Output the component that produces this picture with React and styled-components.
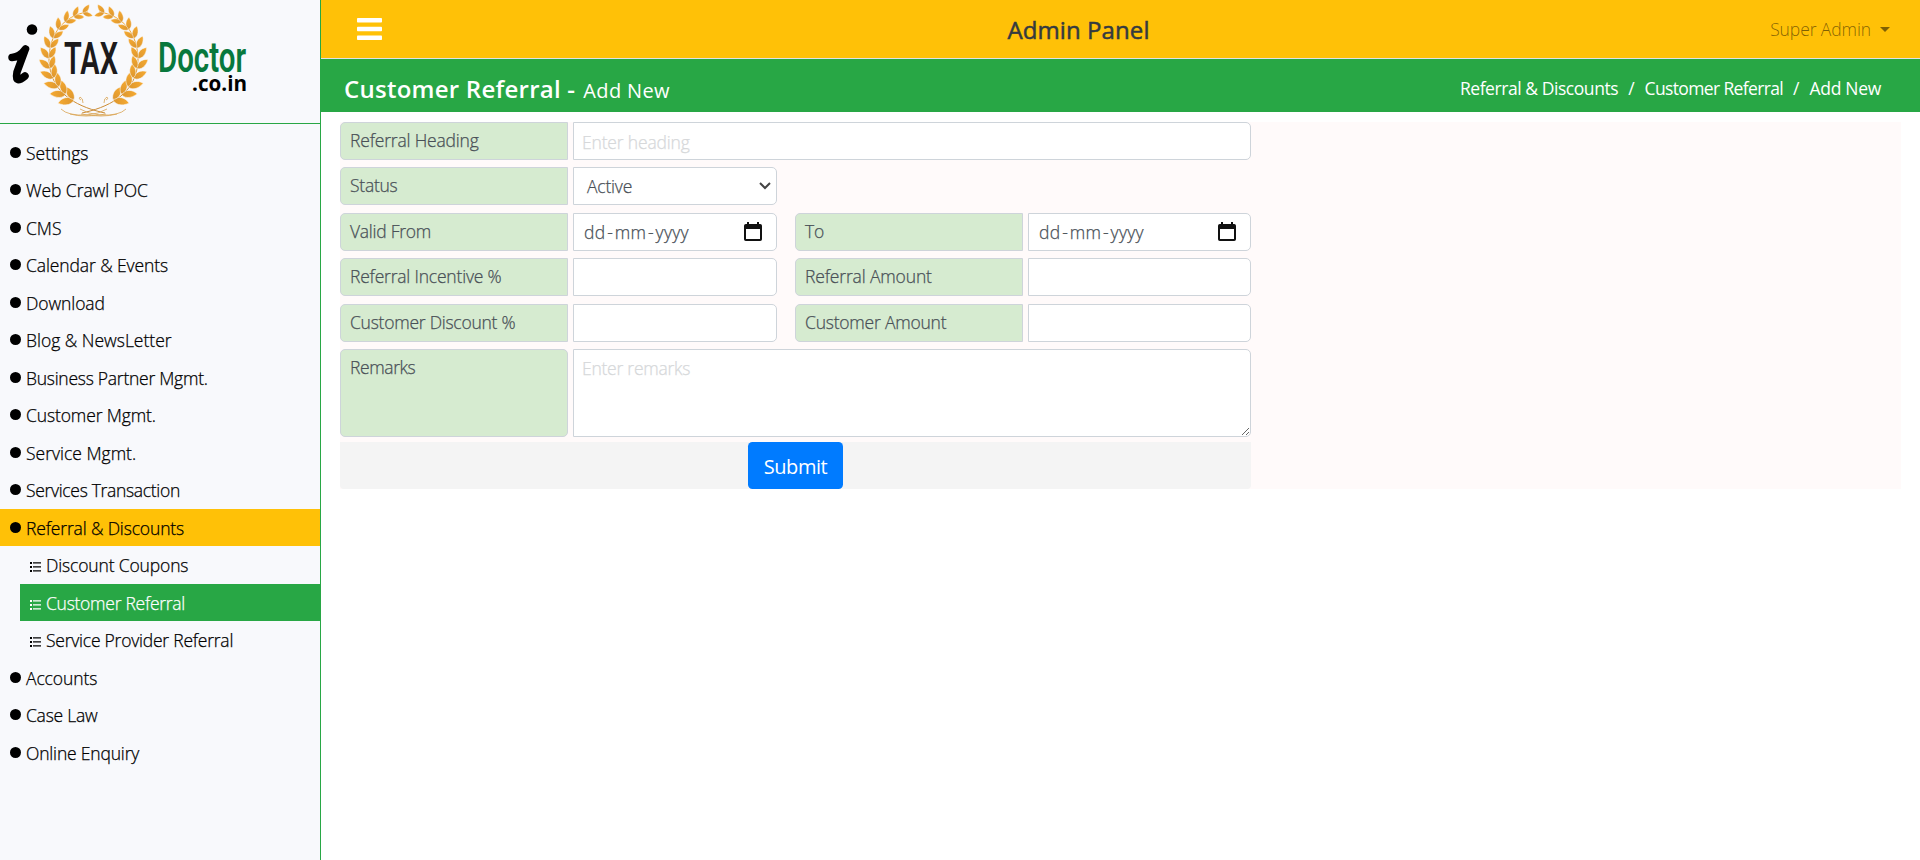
import React from "react";
import styled, { createGlobalStyle } from "styled-components";

const GlobalStyle = createGlobalStyle`
  *, *::before, *::after { box-sizing: border-box; }
  body {
    margin: 0;
    background: #fff;
    color: #000;
    font-family: "Open Sans", "Noto Sans", sans-serif;
    font-size: 17.5px;
    font-weight: 300;
    line-height: 24px;
    -webkit-text-stroke: 0.25px;
    overflow: hidden;
  }
`;

const Page = styled.div`
  display: flex;
  height: 860px;
`;

const Sidebar = styled.aside`
  width: 321px;
  flex: none;
  background: #f8f9fc;
  border-right: 1px solid #28a745;
`;

const Brand = styled.div`
  height: 124px;
  border-bottom: 1px solid #28a745;
  -webkit-text-stroke: 0;
  svg { display: block; }
`;

const Menu = styled.nav`
  display: flex;
  flex-direction: column;
  gap: 0.5px;
  padding-top: 9.7px;
`;

const MenuItem = styled.a`
  display: flex;
  align-items: center;
  height: 37px;
  padding-left: 10px;
  white-space: nowrap;
  background: ${(p) => (p.$active ? "#ffc107" : "transparent")};
`;

const SubItem = styled(MenuItem)`
  margin-left: 20px;
  color: ${(p) => (p.$active ? "#fff" : "#000")};
  background: ${(p) => (p.$active ? "#28a745" : "transparent")};
  svg { margin-top: 5px; }
`;

const Bullet = styled.span`
  width: 11px;
  height: 11px;
  border-radius: 50%;
  background: #000;
`;

const MenuText = styled.span`
  margin-left: 5px;
  padding-top: 1px;
  letter-spacing: ${(p) => p.$track}px;
`;

const Main = styled.main`
  flex: 1;
  min-width: 0;
`;

const TopBar = styled.header`
  display: grid;
  grid-template-columns: 1fr auto 1fr;
  align-items: center;
  height: 59px;
  padding: 0 30px 0 36px;
  background: #ffc107;
  border-bottom: 1px solid #dee2e6;
`;

const MenuButton = styled.button`
  display: flex;
  justify-self: start;
  padding: 0;
  border: 0;
  background: none;
`;

const PanelTitle = styled.h1`
  margin: 0 90px 0 0;
  color: #343a40;
  font-size: 24px;
  font-weight: 400;
  line-height: 30px;
  padding-top: 1px;
  letter-spacing: 0.1px;
  -webkit-text-stroke: 0.5px;
`;

const UserMenu = styled.div`
  display: flex;
  align-items: center;
  justify-self: end;
  gap: 9px;
  color: rgba(0, 0, 0, 0.5);
  letter-spacing: -0.1px;
  -webkit-text-stroke: 0;
`;

const Caret = styled.span`
  border: 5.5px solid transparent;
  border-top-color: currentColor;
  border-bottom: 0;
`;

const TitleBar = styled.div`
  display: flex;
  justify-content: space-between;
  height: 53px;
  padding: 0 39px 0 23px;
  color: #fff;
  background: #28a745;
  -webkit-text-stroke: 0;
`;

const Heading = styled.h2`
  display: flex;
  align-items: baseline;
  gap: 8px;
  margin: 14px 0 0;
  font-size: 24px;
  font-weight: 600;
  line-height: 32px;
  letter-spacing: 0.25px;
  small {
    font-size: 20px;
    font-weight: 400;
    letter-spacing: 0.35px;
  }
`;

const Breadcrumb = styled.div`
  display: flex;
  gap: 10px;
  padding-top: 17px;
  font-weight: 400;
`;

const Crumb = styled.span`
  letter-spacing: ${(p) => p.$track}px;
`;

const Panel = styled.section`
  margin: 9.6px 19px 0 19px;
  background: #fffafa;
`;

const Form = styled.form`
  display: grid;
  grid-template-columns: 228px 204px 241px 223px;
  column-gap: 5px;
  row-gap: 7.2px;
  width: 911px;
`;

const Label = styled.label`
  grid-column: ${(p) => (p.$second ? 3 : 1)};
  min-height: 38.3px;
  margin-left: ${(p) => (p.$second ? "13px" : 0)};
  width: 228px;
  padding: 6px 9px;
  color: #495057;
  background: #d6ebd0;
  border: 1px solid #ced4da;
  border-radius: ${(p) => (p.$tall ? "5px" : "5px 0 0 5px")};
  white-space: nowrap;
  line-height: 23px;
  letter-spacing: ${(p) => p.$track}px;
`;

const Field = styled.input`
  grid-column: ${(p) => (p.$wide ? "2 / 5" : p.$second ? "4" : "2")};
  width: 100%;
  min-width: 0;
  height: 38.3px;
  padding: 2px 8px 0;
  font: inherit;
  letter-spacing: -0.17px;
  color: #495057;
  background: #fff;
  border: 1px solid #ced4da;
  border-radius: 0 5px 5px 0;
  outline: 0;
  &::placeholder { color: #d6d8da; opacity: 1; }
`;

const PickerField = styled(Field).attrs({ as: "div" })`
  display: flex;
  align-items: center;
  justify-content: space-between;
  padding: ${(p) => (p.$select ? "0 5px 1px 13px" : "1px 14px 0 10px")};
  letter-spacing: ${(p) => (p.$select ? "-0.2px" : "0.3px")};
`;

const Dash = styled.span`
  margin: 0 1.7px;
`;

const Remarks = styled.textarea`
  grid-column: 2 / 5;
  height: 88px;
  margin: 0;
  padding: 6px 8px;
  font: inherit;
  letter-spacing: -0.25px;
  background: #fff;
  border: 1px solid #ced4da;
  border-radius: 0 5px 5px 0;
  outline: 0;
  &::placeholder { color: #d6d8da; opacity: 1; }
`;

const Footer = styled.div`
  display: flex;
  justify-content: center;
  width: 911px;
  margin-top: 5px;
  background: #f4f4f4;
  border-radius: 0 0 4px 4px;
`;

const Submit = styled.button`
  width: 95px;
  height: 47px;
  padding: 1px 0 0;
  border: 0;
  border-radius: 4.5px;
  color: #fff;
  background: #007bff;
  font: 400 20px "Open Sans", sans-serif;
  letter-spacing: -0.45px;
  -webkit-text-stroke: 0;
`;

const leaves = [];
for (let i = 0; i < 12; i++) {
  const t = i / 11;
  const a = ((116 + t * 140) * Math.PI) / 180;
  const x = 93.5 + 44 * Math.cos(a);
  const y = 58 + 46 * Math.sin(a);
  const dir = (Math.atan2(46 * Math.cos(a), -44 * Math.sin(a)) * 180) / Math.PI;
  const size = 1.2 - 0.42 * t;
  leaves.push({ x, y, rot: dir - 36, size });
  leaves.push({ x, y, rot: dir + 32, size: size * 0.92 });
}

const Branch = () => (
  <g>
    <path
      d="M105 113 C82 108 50 96 49 60 C49 34 64 15 88 12"
      fill="none"
      stroke="url(#gold)"
      strokeWidth="1"
    />
    {leaves.map((l, i) => (
      <path
        key={i}
        d="M0 0C2 -4 8 -5 14 -1C10 3.500 4 3.500 0 0Z"
        transform={`translate(${l.x} ${l.y}) rotate(${l.rot}) scale(${l.size})`}
        fill="url(#gold-leaf)"
        stroke="#f8f9fc"
        strokeWidth="0.5"
      />
    ))}
    <path
      d="M61 109q7 7 26 6q12-1 20-6M70 114q14 4 36 0M83 103q0-5-3-6q-2 2 1 3"
      fill="none"
      stroke="#d9a352"
      strokeWidth="0.8"
    />
  </g>
);

const Logo = () => (
  <svg width="320" height="123" viewBox="0 0 320 123">
    <defs>
      <linearGradient id="gold" gradientUnits="userSpaceOnUse" x1="0" y1="10" x2="0" y2="112">
        <stop offset="0" stopColor="#f9ac2c" />
        <stop offset="1" stopColor="#c98a35" />
      </linearGradient>
      <linearGradient id="gold-leaf" x1="0" y1="0" x2="1" y2="0">
        <stop offset="0" stopColor="#dc9630" />
        <stop offset="1" stopColor="#f6aa30" />
      </linearGradient>
    </defs>
    <Branch />
    <g transform="matrix(-1 0 0 1 187 0)"><Branch /></g>
    <circle cx="32" cy="29.5" r="5.3" />
    <path
      d="M12 57.500C18 57 22 54 25.500 49M25.500 49L17 72C15 82 19 81 25 76"
      fill="none"
      stroke="#000"
      strokeWidth="7.500"
      strokeLinecap="round"
      strokeLinejoin="round"
    />
    <g fontFamily="Roboto, sans-serif">
      <text x="64" y="73.5" fontSize="45" fontWeight="600" fill="#1c1a1b" textLength="54" lengthAdjust="spacingAndGlyphs">TAX</text>
      <text x="158" y="72" fontSize="42" fontWeight="600" fill="#08783d" textLength="88" lengthAdjust="spacingAndGlyphs">Doctor</text>
    </g>
    <text x="192" y="91" fontSize="22" fontWeight="700" fontFamily="Open Sans, sans-serif" textLength="55" lengthAdjust="spacingAndGlyphs">.co.in</text>
  </svg>
);

const ListIcon = () => (
  <svg width="11" height="10" viewBox="0 0 11 10" fill="currentColor">
    <path d="M0 0h2v2H0zM0 4h2v2H0zM0 8h2v2H0zM3 .3h8v1.3H3zM3 4.3h8v1.3H3zM3 8.3h8v1.3H3z" />
  </svg>
);

const CalendarIcon = () => (
  <svg width="18" height="20" viewBox="0 0 18 20">
    <path d="M3 0h2v2h8V0h2v2h1.2Q18 2 18 3.8v13.4Q18 19 16.200 19H1.800Q0 19 0 17.200V3.800Q0 2 1.800 2H3zM2 7v10h14V7z" fill="#111" fillRule="evenodd" />
  </svg>
);

const menu = [
  ["Settings", 0],
  ["Web Crawl POC", -0.08],
  ["CMS", 0],
  ["Calendar & Events", -0.1],
  ["Download", -0.08],
  ["Blog & NewsLetter", 0],
  ["Business Partner Mgmt.", -0.26],
  ["Customer Mgmt.", -0.12],
  ["Service Mgmt.", 0],
  ["Services Transaction", -0.32],
  ["Referral & Discounts", -0.15, true],
];
const subMenu = [
  ["Discount Coupons", -0.15],
  ["Customer Referral", -0.27, true],
  ["Service Provider Referral", -0.23],
];
const menuEnd = [
  ["Accounts", -0.1],
  ["Case Law", -0.25],
  ["Online Enquiry", -0.18],
];

const renderItem = ([text, track, active]) => (
  <MenuItem key={text} $active={active}>
    <Bullet />
    <MenuText $track={track}>{text}</MenuText>
  </MenuItem>
);

const DateField = ({ second }) => (
  <PickerField $second={second}>
    <span>dd<Dash>-</Dash>mm<Dash>-</Dash>yyyy</span>
    <CalendarIcon />
  </PickerField>
);

export default function App() {
  return (
    <Page>
      <GlobalStyle />
      <Sidebar>
        <Brand><Logo /></Brand>
        <Menu>
          {menu.map(renderItem)}
          {subMenu.map(([text, track, active]) => (
            <SubItem key={text} $active={active}>
              <ListIcon />
              <MenuText $track={track}>{text}</MenuText>
            </SubItem>
          ))}
          {menuEnd.map(renderItem)}
        </Menu>
      </Sidebar>
      <Main>
        <TopBar>
          <MenuButton aria-label="Toggle menu">
            <svg width="25" height="22" viewBox="0 0 25 22" fill="#fff">
              <rect y="0" width="25" height="4.600" rx="0.8" />
              <rect y="8.700" width="25" height="4.600" rx="0.8" />
              <rect y="17.400" width="25" height="4.600" rx="0.8" />
            </svg>
          </MenuButton>
          <PanelTitle>Admin Panel</PanelTitle>
          <UserMenu>Super Admin<Caret /></UserMenu>
        </TopBar>
        <TitleBar>
          <Heading>Customer Referral - <small>Add New</small></Heading>
          <Breadcrumb>
            <Crumb $track={-0.44}>Referral &amp; Discounts</Crumb>
            <span>/</span>
            <Crumb $track={-0.64}>Customer Referral</Crumb>
            <span>/</span>
            <Crumb $track={-0.3}>Add New</Crumb>
          </Breadcrumb>
        </TitleBar>
        <Panel>
          <Form>
            <Label $track={-0.18}>Referral Heading</Label>
            <Field $wide placeholder="Enter heading" />
            <Label $track={-0.25}>Status</Label>
            <PickerField $select>
              <span>Active</span>
              <svg width="12" height="8" viewBox="0 0 12 8" fill="none" stroke="#444" strokeWidth="2">
                <path d="M1 1l5 5 5-5" />
              </svg>
            </PickerField>
            <Label $track={-0.25}>Valid From</Label>
            <DateField />
            <Label $second $track={-0.3}>To</Label>
            <DateField second />
            <Label $track={-0.2}>Referral Incentive %</Label>
            <Field />
            <Label $second $track={-0.15}>Referral Amount</Label>
            <Field $second />
            <Label $track={-0.25}>Customer Discount %</Label>
            <Field />
            <Label $second $track={-0.22}>Customer Amount</Label>
            <Field $second />
            <Label $tall $track={-0.4}>Remarks</Label>
            <Remarks placeholder="Enter remarks" />
          </Form>
          <Footer><Submit type="button">Submit</Submit></Footer>
        </Panel>
      </Main>
    </Page>
  );
}
